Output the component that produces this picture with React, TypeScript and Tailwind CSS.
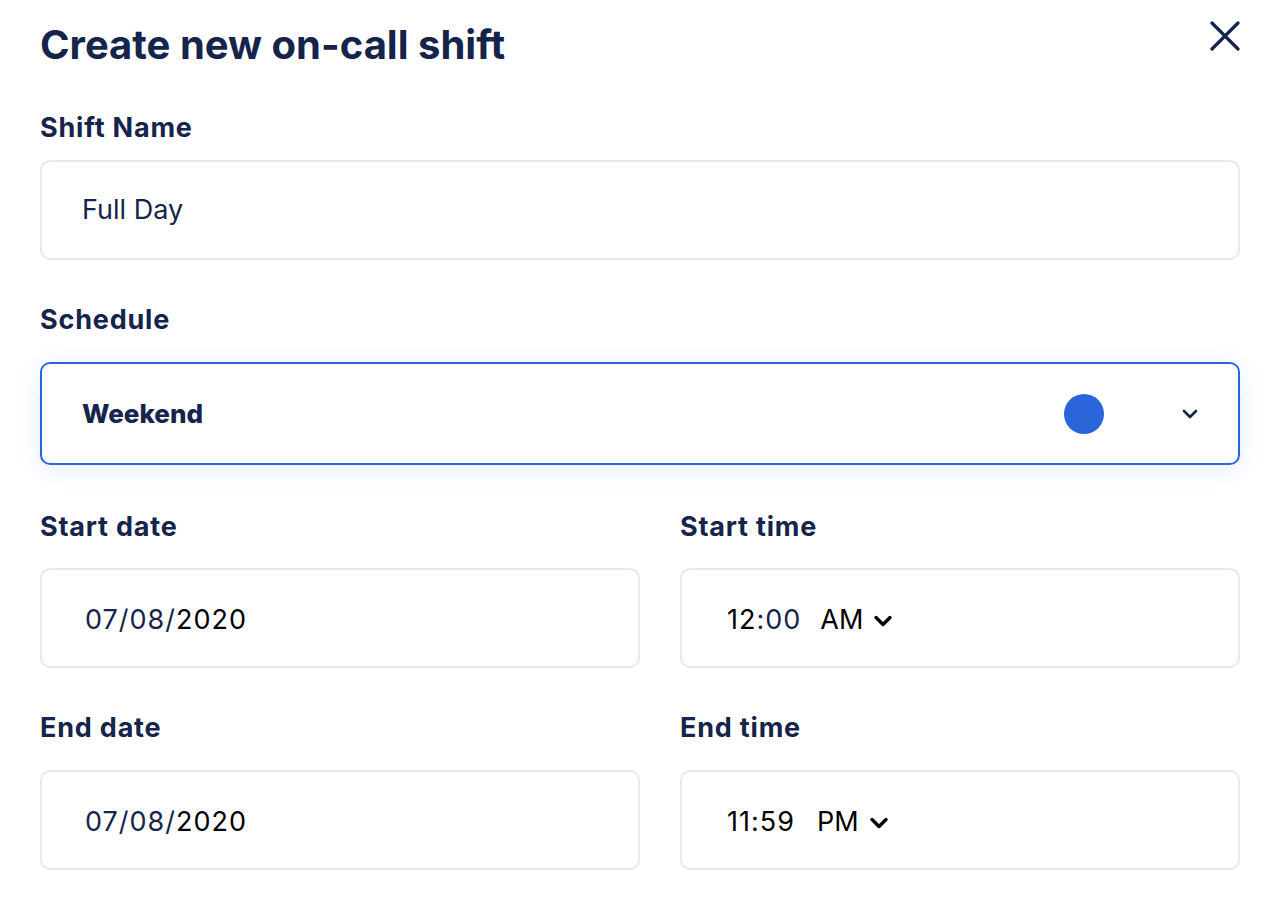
import { ChevronDown } from "lucide-react";

const font = { fontFamily: "Inter, 'Noto Sans', sans-serif" };

const Label = ({ children, className = "" }: { children: React.ReactNode; className?: string }) => (
  <div className={`h-[32px] flex items-center text-[27px] font-bold tracking-[0.8px] text-[#14244a] ${className}`}>
    {children}
  </div>
);

const Box = ({ children, className = "" }: { children: React.ReactNode; className?: string }) => (
  <div
    className={`h-[100px] rounded-[10px] border-2 border-[#e6e8f0] bg-white flex items-center px-[40px] ${className}`}
  >
    {children}
  </div>
);

const Caret = () => (
  <svg width="22" height="14" viewBox="0 0 22 14" className="ml-[9px]">
    <path d="M4 3.5l7 7 7-7" fill="none" stroke="#000" strokeWidth="3.4" strokeLinecap="round" strokeLinejoin="round" />
  </svg>
);

const num = "text-[27px] tracking-[1px] text-black";

export default function App() {
  return (
    <div className="w-[1286px] h-[898px] bg-white" style={font}>
      <div className="w-[1200px] ml-[40px] pt-[22px]">
        <div className="flex items-start justify-between">
          <h1 className="text-[40px] font-bold text-[#14244a] leading-[46px]">Create new on-call shift</h1>
          <svg width="30" height="30" viewBox="0 0 30 30" className="mt-[-1px]">
            <path d="M2 2l26 26M28 2L2 28" stroke="#14244a" strokeWidth="3.2" strokeLinecap="round" />
          </svg>
        </div>

        <Label className="mt-[44px] mb-[16px]">Shift Name</Label>
        <Box>
          <span className="text-[27px] text-[#14244a]">Full Day</span>
        </Box>

        <Label className="mt-[44px] mb-[26px]">Schedule</Label>
        <div className="h-[103px] rounded-[10px] border-2 border-[#2a66d9] bg-white flex items-center pl-[40px] pr-[36px] shadow-[0_4px_24px_rgba(42,102,217,0.12)]">
          <span className="text-[26px] font-extrabold text-[#14244a] flex-1">Weekend</span>
          <span className="w-[40px] h-[40px] rounded-full bg-[#2a66d9]" />
          <ChevronDown className="ml-[74px] text-[#14244a]" size={24} strokeWidth={2.6} />
        </div>

        <div className="mt-[46px] grid grid-cols-[600px_560px] gap-x-[40px]">
          <div>
            <Label className="mb-[25px]">Start date</Label>
            <Box className="pl-[43px] pt-[5px]">
              <span className={num}>
                <span className="text-[#14244a]">07/08/</span>2020
              </span>
            </Box>
          </div>
          <div>
            <Label className="mb-[25px]">Start time</Label>
            <Box className="pl-[45px] pt-[5px]">
              <span className={num}>
                12<span className="text-[#14244a]">:00</span>
              </span>
              <span className="text-[27px] text-black ml-[19px]">AM</span>
              <Caret />
            </Box>
          </div>
          <div className="mt-[44px]">
            <Label className="mb-[26px]">End date</Label>
            <Box className="pl-[43px] pt-[5px]">
              <span className={num}>
                <span className="text-[#14244a]">07/08/</span>2020
              </span>
            </Box>
          </div>
          <div className="mt-[44px]">
            <Label className="mb-[26px]">End time</Label>
            <Box className="pl-[45px] pt-[5px]">
              <span className={num}>11:59</span>
              <span className="text-[27px] text-black ml-[22px]">PM</span>
              <Caret />
            </Box>
          </div>
        </div>
      </div>
    </div>
  );
}
